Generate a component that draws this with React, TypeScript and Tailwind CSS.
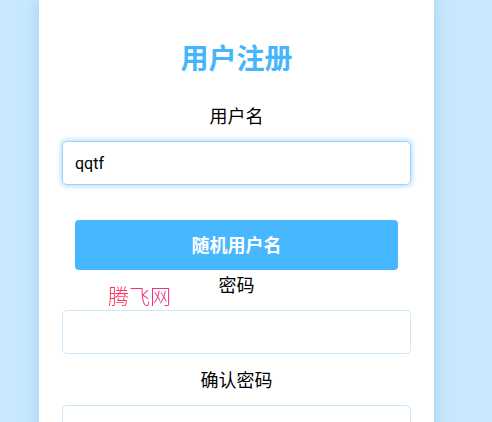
import React from "react";

const font = { fontFamily: '"Noto Sans", "Noto Sans CJK SC", sans-serif' };

export default function App() {
  return (
    <div className="min-h-[422px] w-full bg-[#c8e8fd] overflow-hidden" style={font}>
      <div className="relative ml-[39px] w-[395px] bg-white px-[23px] pt-[37px] pb-[40px] shadow-[0_0_14px_rgba(90,160,215,0.35)]">
        <h1 className="text-center text-[28px] leading-[42px] font-bold text-[#45b6fb] mb-[24px]">用户注册</h1>

        <label className="block text-center text-[18px] leading-[27px] text-black mb-[11px]">用户名</label>
        <input
          defaultValue="qqtf"
          className="block w-full h-[44px] rounded-[5px] border border-[#9ad4fd] px-[12px] text-[16px] text-black outline-none shadow-[0_0_4px_2px_rgba(120,195,250,0.45)]"
          style={{ fontFamily: 'Roboto, "Noto Sans", sans-serif' }}
        />

        <button className="mt-[35px] mx-[13px] w-[323px] h-[50px] rounded-[4px] bg-[#47b8ff] text-white text-[18px] font-bold">
          随机用户名
        </button>

        <label className="block mt-[2px] text-center text-[18px] leading-[27px] text-black mb-[11px]">密码</label>
        <input
          type="password"
          className="block w-full h-[44px] rounded-[5px] border border-[#c9e7fd] px-[12px] text-[16px] outline-none"
        />

        <label className="block mt-[13px] text-center text-[18px] leading-[27px] text-black mb-[11px]">确认密码</label>
        <input
          type="password"
          className="block w-full h-[44px] rounded-[5px] border border-[#c9e7fd] px-[12px] text-[16px] outline-none"
        />

        <span
          className="absolute left-[69px] top-[281px] text-[21px] leading-[28px] font-light bg-gradient-to-r from-[#ff2f4f] to-[#e6318f] bg-clip-text text-transparent"
          style={{ fontFamily: '"Noto Sans CJK SC", sans-serif' }}
        >
          腾飞网
        </span>
      </div>
    </div>
  );
}
